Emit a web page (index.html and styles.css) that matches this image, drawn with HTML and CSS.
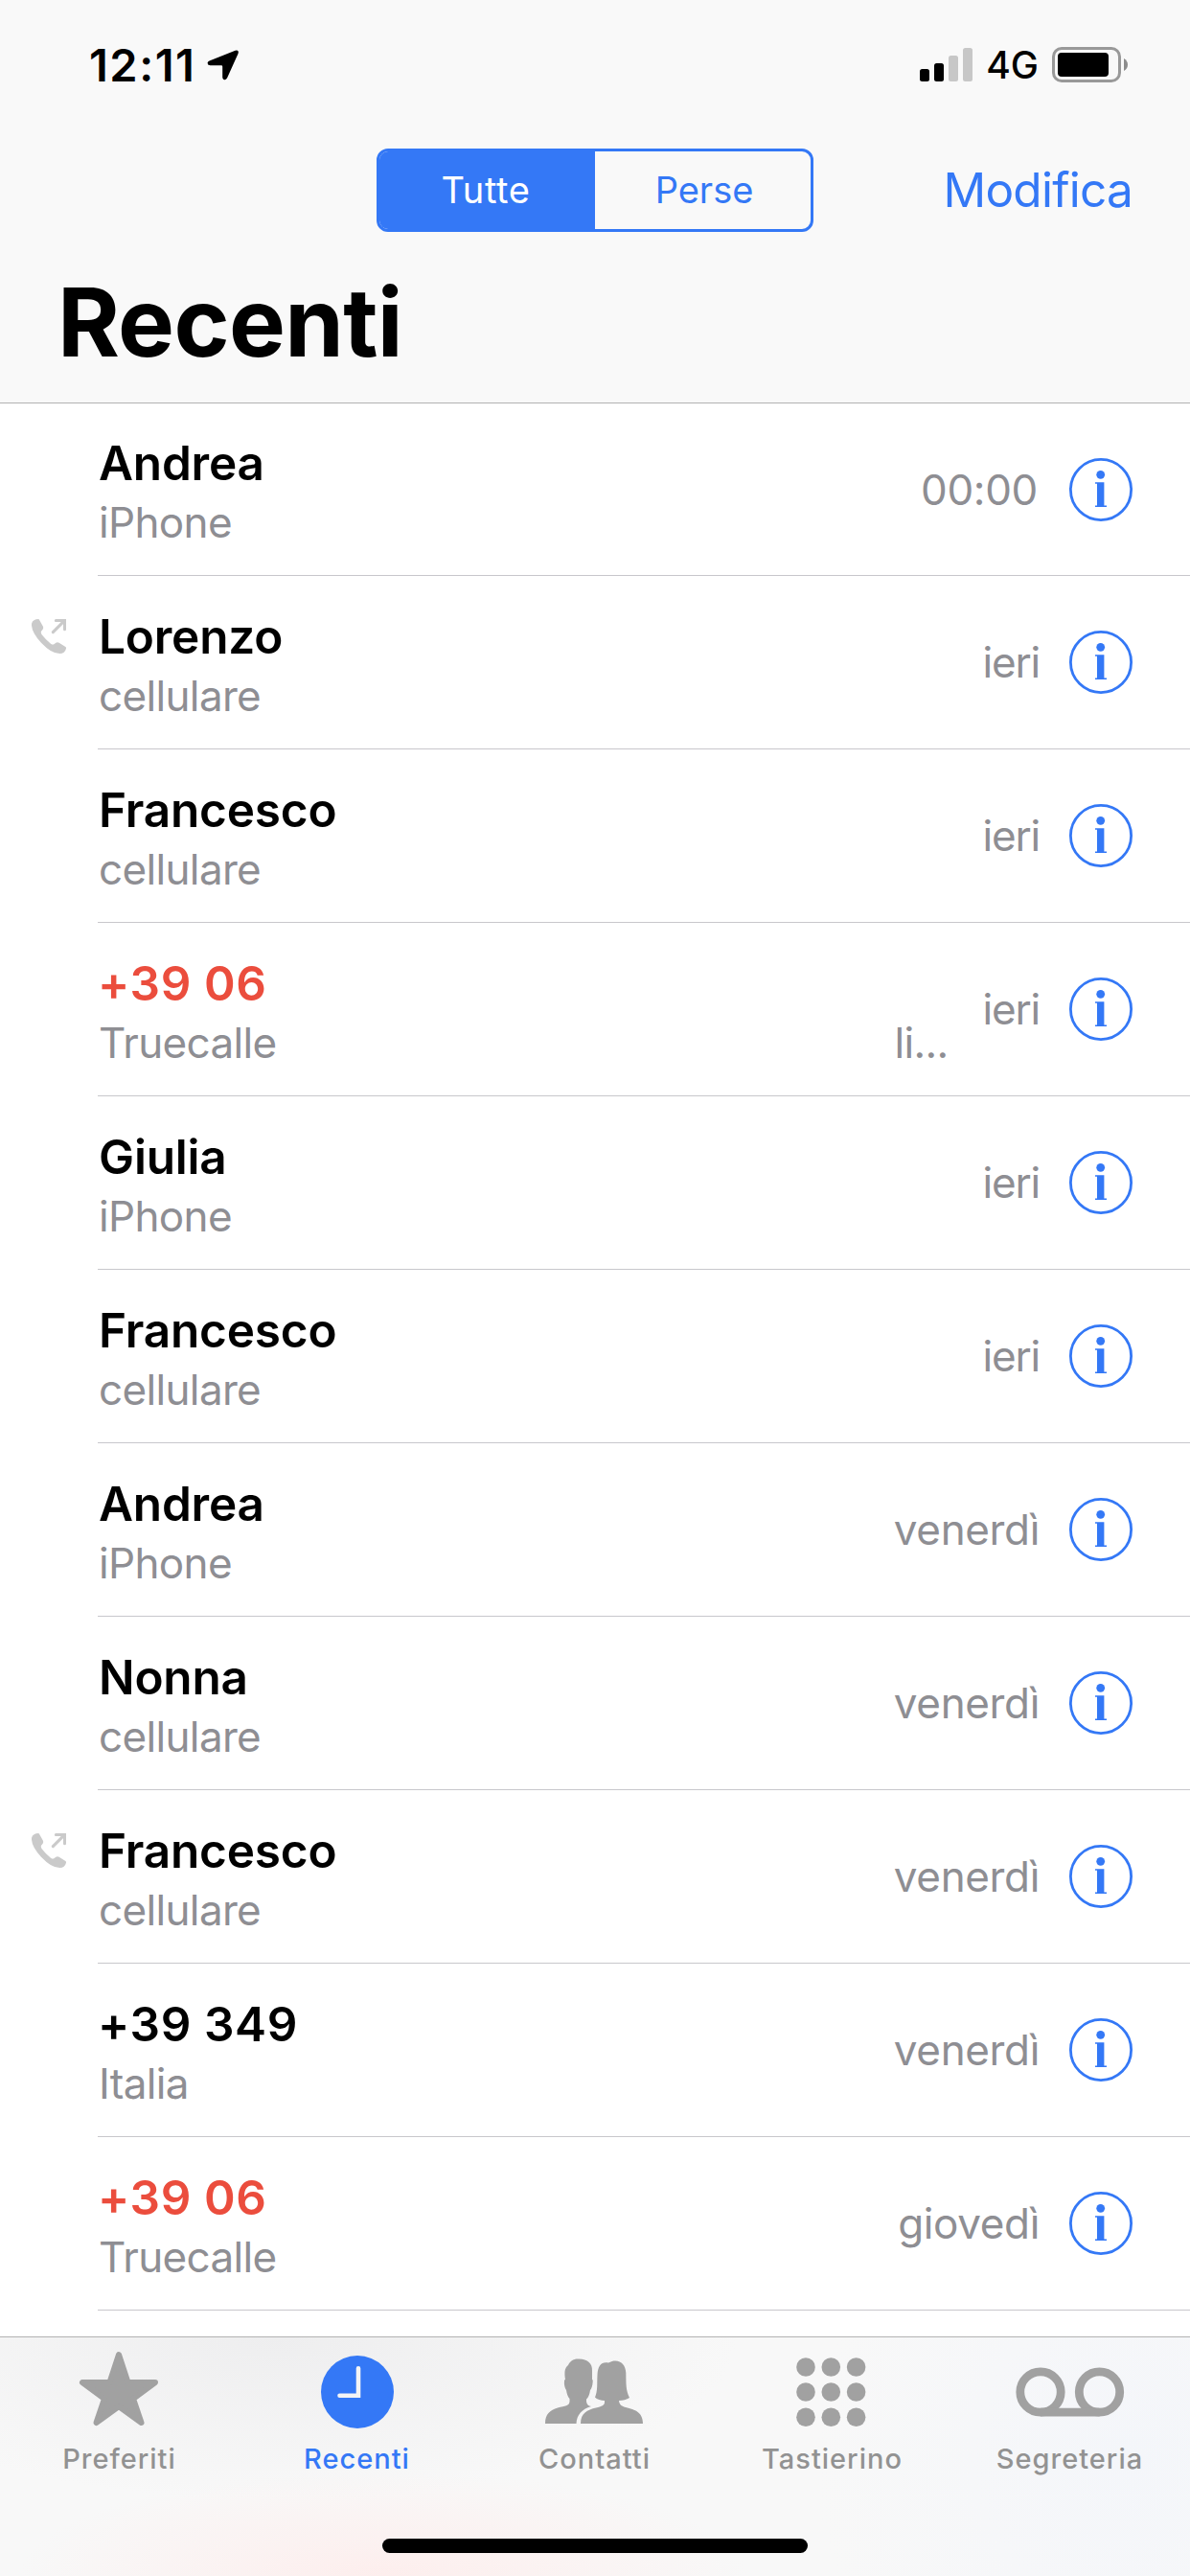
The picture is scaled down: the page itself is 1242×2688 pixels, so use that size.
FILE: index.html
```html
<!DOCTYPE html>
<html lang="it">
<head>
<meta charset="utf-8">
<title>Recenti</title>
<link rel="stylesheet" href="styles.css">
</head>
<body>
<svg class="defs" aria-hidden="true">
  <symbol id="info" viewBox="0 0 66 66">
    <circle cx="33" cy="33" r="31.6" fill="none" stroke="currentColor" stroke-width="2.8"/>
    <circle cx="32.7" cy="17.3" r="4.4" fill="currentColor"/>
    <path fill="currentColor" d="M27 25.3h9.4v24.2H39V51H27v-1.5h2V26.8h-2z"/>
  </symbol>
  <symbol id="outgoing" viewBox="0 0 108 108">
    <path fill="currentColor" d="M22 0Q4 0 0 14Q-2 40 30 74Q62 108 88 108Q104 108 108 92Q109 89 105 86L86 74Q80 71 75 75L70 79Q66 81 60 77Q44 65 32 49Q28 43 30 38L35 32Q38 27 35 22L24 2Z"/>
    <path fill="none" stroke="currentColor" stroke-width="9" stroke-linecap="round" stroke-linejoin="miter" d="M67 41L103 5M76 4.5H103.500V32"/>
  </symbol>
</svg>
<div class="screen">
  <header class="header">
    <div class="status">
      <span class="clock">12:11</span>
      <svg class="location" viewBox="0 0 34 32"><path d="M29.500 .7Q33.800-.6 32.500 4L21 29.500Q19.500 32 17.500 31Q16.200 30.400 16.200 28.500V17.500Q16.200 16.300 15 16.300H3.500Q.8 16.200 .6 14Q.4 12.500 2.500 11.500Z"/></svg>
      <svg class="signal" viewBox="0 0 55 35">
        <rect y="22" width="10" height="13" rx="2.500"/><rect x="15" y="16" width="10" height="19" rx="2.500"/>
        <g fill="#c7c7c7"><rect x="30" y="8" width="10" height="27" rx="2.500"/><rect x="45" width="10" height="35" rx="2.500"/></g>
      </svg>
      <span class="network">4G</span>
      <svg class="battery" viewBox="0 0 80 37">
        <rect x="1.500" y="1.500" width="69" height="34" rx="8.500" fill="none" stroke="#999" stroke-width="3"/>
        <rect x="6" y="6" width="53" height="25" rx="4"/>
        <path fill="#8c8c8c" d="M75 12Q79 14.500 79 18.500T75 25Z"/>
      </svg>
    </div>
    <nav class="nav">
      <div class="segments"><span class="segment segment-on">Tutte</span><span class="segment">Perse</span></div>
      <a class="edit">Modifica</a>
    </nav>
    <h1 class="title">Recenti</h1>
  </header>

  <main class="list">
    <div class="row"><div class="mark"></div><div class="cell"><div class="who"><div class="name">Andrea</div><div class="sub">iPhone</div></div><span class="when when-clock">00:00</span><svg class="info"><use href="#info"/></svg></div></div>
    <div class="row"><div class="mark"><svg class="outgoing"><use href="#outgoing"/></svg></div><div class="cell"><div class="who"><div class="name">Lorenzo</div><div class="sub">cellulare</div></div><span class="when when-short">ieri</span><svg class="info"><use href="#info"/></svg></div></div>
    <div class="row"><div class="mark"></div><div class="cell"><div class="who"><div class="name">Francesco</div><div class="sub">cellulare</div></div><span class="when when-short">ieri</span><svg class="info"><use href="#info"/></svg></div></div>
    <div class="row"><div class="mark"></div><div class="cell"><div class="who"><div class="name number missed">+39 06</div><div class="sub"><span>Truecalle</span><span>li...</span></div></div><span class="when when-short">ieri</span><svg class="info"><use href="#info"/></svg></div></div>
    <div class="row"><div class="mark"></div><div class="cell"><div class="who"><div class="name">Giulia</div><div class="sub">iPhone</div></div><span class="when when-short">ieri</span><svg class="info"><use href="#info"/></svg></div></div>
    <div class="row"><div class="mark"></div><div class="cell"><div class="who"><div class="name">Francesco</div><div class="sub">cellulare</div></div><span class="when when-short">ieri</span><svg class="info"><use href="#info"/></svg></div></div>
    <div class="row"><div class="mark"></div><div class="cell"><div class="who"><div class="name">Andrea</div><div class="sub">iPhone</div></div><span class="when">venerdì</span><svg class="info"><use href="#info"/></svg></div></div>
    <div class="row"><div class="mark"></div><div class="cell"><div class="who"><div class="name">Nonna</div><div class="sub">cellulare</div></div><span class="when">venerdì</span><svg class="info"><use href="#info"/></svg></div></div>
    <div class="row"><div class="mark"><svg class="outgoing"><use href="#outgoing"/></svg></div><div class="cell"><div class="who"><div class="name">Francesco</div><div class="sub">cellulare</div></div><span class="when">venerdì</span><svg class="info"><use href="#info"/></svg></div></div>
    <div class="row"><div class="mark"></div><div class="cell"><div class="who"><div class="name number">+39 349</div><div class="sub">Italia</div></div><span class="when">venerdì</span><svg class="info"><use href="#info"/></svg></div></div>
    <div class="row"><div class="mark"></div><div class="cell"><div class="who"><div class="name number missed">+39 06</div><div class="sub">Truecalle</div></div><span class="when">giovedì</span><svg class="info"><use href="#info"/></svg></div></div>
  </main>

  <footer class="tabbar">
    <div class="tabs">
      <div class="tab">
        <svg class="icon" viewBox="0 0 110 100"><path stroke="currentColor" stroke-width="6" stroke-linejoin="round" d="M55 11L64.500 40H93L70 57L78.500 82L55 65L31.500 82L40 57L17 40H45.500Z"/></svg>
        <span class="label">Preferiti</span>
      </div>
      <div class="tab tab-on">
        <svg class="icon" viewBox="0 0 110 100"><circle cx="56" cy="50" r="38"/><path fill="none" stroke="#f4f4f5" stroke-width="4.600" stroke-linecap="round" d="M57 25.300V53.700H37.500"/></svg>
        <span class="label">Recenti</span>
      </div>
      <div class="tab">
        <svg class="icon" viewBox="0 0 110 100">
          <path d="M4 83C4 73 9 69 17 66.500C25 64.500 29 64.500 29.500 60V57C27.500 55 26.500 51 26 48C24.500 46 23.500 42 24 38.500Q23.800 37 25 37C24 30 24 25 28 22C30 18 33 15.500 38 15.500C48 15 53.500 20 53 28V37Q54 37 53.700 39C53.500 44 52 47 51 48C50.500 52 49 56 47 57.500V60C47.500 63 49 64.500 52 65C42 68 37 74 36.500 83Z"/>
          <path d="M41 83C41 72 48 68.500 57 66.500C63 65 66 64 66 60.500V59C62 59 58 57.500 56 55.500C59 49 58 41 58.500 32C59 22 63 18 70 19.500C80 14 88 20 88.300 30C88.500 41 88 48 92 56C89 58 85 59 81 59C81.500 63 83 64.500 88 66C98 68.500 106 71 106 83Z"/>
        </svg>
        <span class="label">Contatti</span>
      </div>
      <div class="tab">
        <svg class="icon" viewBox="0 0 110 100">
          <circle cx="28" cy="24" r="9.800"/><circle cx="54.300" cy="24" r="9.800"/><circle cx="80.600" cy="24" r="9.800"/>
          <circle cx="28" cy="50" r="9.800"/><circle cx="54.300" cy="50" r="9.800"/><circle cx="80.600" cy="50" r="9.800"/>
          <circle cx="28" cy="76.300" r="9.800"/><circle cx="54.300" cy="76.300" r="9.800"/><circle cx="80.600" cy="76.300" r="9.800"/>
        </svg>
        <span class="label">Tastierino</span>
      </div>
      <div class="tab">
        <svg class="icon icon-wide" viewBox="0 0 120 100"><g fill="none" stroke="currentColor" stroke-width="8.800"><circle cx="30" cy="50" r="21.200"/><circle cx="91.500" cy="50" r="21.200"/><path d="M30 71.200H91.500"/></g></svg>
        <span class="label">Segreteria</span>
      </div>
    </div>
    <div class="home"></div>
  </footer>
</div>
</body>
</html>
```
FILE: styles.css
```css
* { box-sizing: border-box; }

body {
  margin: 0;
  background: #fff;
  color: #000;
  font-family: Inter, "Liberation Sans", sans-serif;
}

svg { display: block; flex: none; }
.defs { position: absolute; width: 0; height: 0; }

.screen {
  display: flex;
  flex-direction: column;
  width: 1242px;
  height: 2688px;
  overflow: hidden;
}

/* Header */
.header {
  flex: none;
  height: 421px;
  background: #f9f9f9;
  border-bottom: 1px solid #b2b2b2;
}

.status {
  display: flex;
  align-items: center;
  height: 135px;
  padding: 0 64px 0 93px;
}
.clock { font-size: 47px; font-weight: 600; letter-spacing: 1.5px; }
.location { width: 34px; height: 32px; margin-left: 12px; }
.signal { width: 55px; height: 35px; margin-left: auto; }
.network { margin-left: 14px; font-size: 39px; font-weight: 500; }
.battery { width: 80px; height: 37px; margin-left: 14px; }

.nav {
  display: grid;
  grid-template-columns: 1fr 456px 1fr;
  align-items: center;
  height: 127px;
  padding: 0 60px;
  color: #3478f6;
}
.segments {
  grid-column: 2;
  display: flex;
  height: 87px;
  border: 3px solid #3478f6;
  border-radius: 12px;
  overflow: hidden;
}
.segment {
  flex: 1;
  display: flex;
  align-items: center;
  justify-content: center;
  padding: 0 0 1px 3px;
  font-size: 38px;
}
.segment-on {
  padding: 0 3px 1px 0;
  background: #3478f6;
  color: #fff;
  letter-spacing: .6px;
}
.edit { justify-self: end; padding-bottom: 2px; font-size: 49.5px; letter-spacing: -.75px; }

.title {
  margin: 14px 0 0 60px;
  font-size: 99px;
  font-weight: 700;
  line-height: 120px;
  letter-spacing: -.7px;
}

/* Call list */
.list { flex: 1; min-height: 0; overflow: hidden; }
.row { display: flex; height: 181px; }
.row:first-child { height: 180px; }
.mark { flex: none; width: 102px; padding: 45px 0 0 33px; }
.outgoing { width: 36px; height: 36px; color: #cacaca; }
.cell {
  flex: 1;
  display: flex;
  align-items: center;
  padding: 0 60px 0 1px;
  border-bottom: 1px solid #c8c7cc;
}
.who { flex: 1; padding-top: 7px; }
.name {
  font-size: 49.5px;
  font-weight: 600;
  line-height: 60px;
  letter-spacing: -.2px;
}
.number { margin-left: -1px; letter-spacing: .6px; }
.missed { color: #eb4d3d; }
.sub {
  display: flex;
  justify-content: space-between;
  margin-top: 2px;
  font-size: 44px;
  line-height: 60px;
  letter-spacing: -.65px;
  color: #8e8e93;
}
.when {
  margin: 0 31px 0 36px;
  font-size: 44px;
  letter-spacing: -.35px;
  color: #8e8e93;
}
.when-short { letter-spacing: -1.2px; }
.when-clock { margin-right: 33px; }
.info { width: 66px; height: 66px; color: #3478f6; }

/* Tab bar */
.tabbar {
  flex: none;
  display: flex;
  flex-direction: column;
  justify-content: space-between;
  height: 250px;
  padding-bottom: 24px;
  border-top: 1px solid #b2b2b2;
  background:
    radial-gradient(ellipse 380px 110px at 400px 100%, #fdeeed 0%, #fdeeed00 100%),
    radial-gradient(ellipse 480px 170px at 290px 0%, #eeeeef 0%, #eeeeef00 100%),
    radial-gradient(ellipse 330px 330px at 1180px 50%, #f4f6fa 0%, #f4f6fa00 100%),
    #f8f8f8;
}
.tabs { display: grid; grid-template-columns: repeat(5, 248px); }
.tab {
  display: flex;
  flex-direction: column;
  align-items: center;
  padding-top: 7px;
  color: #929292;
}
.tab-on { color: #3478f6; }
.icon { width: 110px; height: 100px; fill: currentColor; color: #a1a1a1; }
.icon-wide { width: 120px; }
.tab-on .icon { color: inherit; }
.label {
  padding-left: 1px;
  font-size: 29px;
  font-weight: 500;
  line-height: 40px;
  letter-spacing: 1px;
}
.home {
  align-self: center;
  width: 444px;
  height: 15px;
  border-radius: 8px;
  background: #000;
}
```
